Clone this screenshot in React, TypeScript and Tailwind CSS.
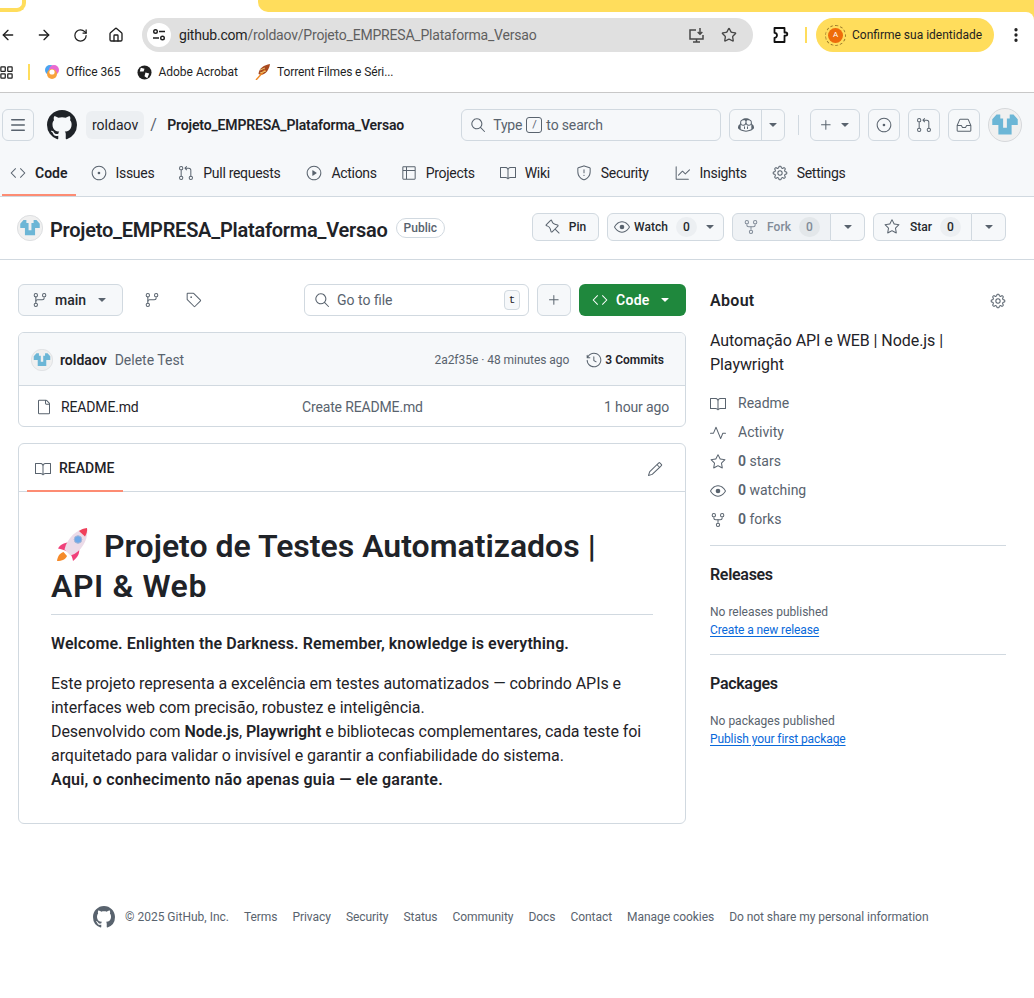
import React from "react";
import {
  GoCode, GoIssueOpened, GoGitPullRequest, GoPlay, GoTable, GoBook, GoShield, GoGraph, GoGear,
  GoRepoForked, GoStar, GoEye, GoPin, GoHistory, GoFile, GoTag, GoGitBranch, GoPencil, GoSearch,
  GoPlus, GoInbox, GoPulse, GoTriangleDown, GoCopilot,
} from "react-icons/go";
import { ArrowLeft, ArrowRight, RotateCw, Home, Star, EllipsisVertical, LayoutGrid } from "lucide-react";

function GoMarkGithub({ size, className = "" }: { size: number; className?: string }) {
  return (
    <svg width={size} height={size} viewBox="0 0 16 16" fill="currentColor" className={`shrink-0 ${className}`}>
      <path d="M8 0c4.42 0 8 3.58 8 8a8.013 8.013 0 0 1-5.45 7.59c-.4.08-.55-.17-.55-.38 0-.27.01-1.13.01-2.2 0-.75-.25-1.23-.54-1.48 1.78-.2 3.65-.88 3.65-3.95 0-.88-.31-1.59-.82-2.15.08-.2.36-1.02-.08-2.12 0 0-.67-.22-2.2.82-.64-.18-1.32-.27-2-.27-.68 0-1.36.09-2 .27-1.53-1.03-2.2-.82-2.2-.82-.44 1.1-.16 1.92-.08 2.12-.51.56-.82 1.28-.82 2.15 0 3.06 1.86 3.75 3.64 3.95-.23.2-.44.55-.51 1.07-.46.21-1.61.55-2.33-.66-.15-.24-.6-.83-1.23-.82-.67.01-.27.38.01.53.34.19.73.9.82 1.13.16.45.68 1.31 2.69.94 0 .67.01 1.3.01 1.49 0 .21-.15.45-.55.38A7.995 7.995 0 0 1 0 8c0-4.42 3.58-8 8-8Z" />
    </svg>
  );
}

function ThreeBars({ size }: { size: number }) {
  return (
    <svg width={size} height={size} viewBox="0 0 16 16" fill="none" stroke="currentColor" strokeWidth="1.5" strokeLinecap="round">
      <path d="M1.75 2.75h12.5M1.75 8h12.5M1.75 13.25h12.5" />
    </svg>
  );
}

function Avatar({ size, className = "" }: { size: number; className?: string }) {
  return (
    <svg width={size} height={size} viewBox="0 0 36 36" className={`shrink-0 ${className}`}>
      <circle cx="18" cy="18" r="17.5" fill="#f0f0f0" stroke="#d4d7da" />
      <path d="M4.5 12 L9 7 H13 V11 H16 V21 H20 V11 H23 V7 H27 L31.5 12 V18 H25 V28 H11 V18 H4.5 Z" fill="#6cb6d6" />
    </svg>
  );
}

function Rocket() {
  return (
    <svg width="36" height="36" viewBox="0 0 36 36" className="shrink-0">
      <path d="M2 34 C2.5 29 5 26 8.5 25 L12 29 C11 32 7 34 2 34 Z" fill="#f58a2a" />
      <path d="M3 21.5 C5 18 9 15.5 14 15.5 L15 26 C12 24 7 22 3 21.5 Z" fill="#f0407a" />
      <path d="M15 26 L24 21 C25 26 23 30 18 34 C17.5 31 16.5 28.5 15 26 Z" fill="#f0407a" />
      <path d="M32 1 C22 2 12 11 9.5 22.5 L15.5 28.5 C26 25.5 34 12 32 1 Z" fill="#ecdbe8" />
      <path d="M32 1 C29 1.3 26 2.5 24 4 L30 9.5 C31.5 7 32.5 4 32 1 Z" fill="#f0405a" />
      <circle cx="23" cy="12.5" r="3.8" fill="#6fa8e8" stroke="#a9b7d6" />
    </svg>
  );
}

function Chrome() {
  const bm = "flex items-center gap-[6px] text-[12px] text-[#1f1f1f]";
  return (
    <div className="bg-white">
      <div className="flex h-[12px]">
        <div className="w-[26px] h-[12px] border-r-[4px] border-b-[4px] border-[#ffdd5c] rounded-br-[9px]" />
        <div className="w-[232px]" />
        <div className="flex-1 bg-[#ffdd5c] rounded-bl-[10px]" />
      </div>
      <div className="relative flex items-center h-[46px]">
        <span className="absolute top-0 right-0 w-[8px] h-[8px] bg-[#ffdd5c]"><span className="block w-full h-full bg-white rounded-tr-[8px]" /></span>
        <div className="flex items-center w-[142px] text-[#1f1f1f]">
          <ArrowLeft size={16} strokeWidth={2} />
          <ArrowRight size={16} strokeWidth={2} className="ml-[20px]" />
          <RotateCw size={15} strokeWidth={2} className="ml-[21px]" />
          <Home size={16} strokeWidth={2} className="ml-[20px]" />
        </div>
        <div className="w-[611px] h-[34px] rounded-full bg-[#e0e0e0] flex items-center pl-[5px]">
          <span className="w-[24px] h-[24px] bg-white rounded-full flex items-center justify-center text-[#1f1f1f]">
            <svg width="14" height="14" viewBox="0 0 14 14" fill="none" stroke="currentColor" strokeWidth="1.4">
              <circle cx="3.5" cy="3.5" r="1.8" /><path d="M7 3.5h6M1 10h6" /><circle cx="10.5" cy="10" r="1.8" />
            </svg>
          </span>
          <span className="ml-[8px] text-[14px] tracking-[-0.2px]"><span className="text-[#1f1f1f]">github.com</span><span className="text-[#5f5f5f]">/roldaov/Projeto_EMPRESA_Plataforma_Versao</span></span>
          <svg width="17" height="17" viewBox="0 0 17 17" fill="none" stroke="#474747" strokeWidth="1.5" className="ml-auto">
            <path d="M8 3H2v9h13V8M5 15h7M8.5 12v3M12 1v6M9.7 5 12 7.3 14.3 5" />
          </svg>
          <Star size={16} strokeWidth={2} className="ml-[16px] mr-[16px] text-[#474747]" />
        </div>
        <svg width="18" height="18" viewBox="0 0 18 18" fill="none" stroke="#111" strokeWidth="1.8" strokeLinejoin="round" className="ml-[18px]">
          <path d="M3.5 2h10v4.5h1.2a1.6 1.6 0 0 1 0 3.2h-1.2V16h-10v-4.2a2.4 2.4 0 0 0 0-5V2Z" />
        </svg>
        <span className="ml-[16px] w-[2px] h-[16px] bg-[#ffdd5c]" />
        <div className="ml-[9px] w-[178px] h-[34px] rounded-full bg-[#ffdd5c] flex items-center pl-[12px] gap-[9px]">
          <span className="w-[15px] h-[15px] rounded-full bg-[#ee6c0a] text-white text-[8px] flex items-center justify-center outline-1 outline-dashed outline-[#9a7a2a] outline-offset-[2px] shrink-0">A</span>
          <span className="text-[12px] text-[#1f1f1f] whitespace-nowrap">Confirme sua identidade</span>
        </div>
        <EllipsisVertical size={18} strokeWidth={2.4} className="ml-[13px] text-[#1f1f1f]" />
      </div>
      <div className="flex items-center h-[35px] pb-[6px] border-b border-[#c8c8c8]">
        <LayoutGrid size={15} strokeWidth={2} className="text-[#1f1f1f] -ml-[1px]" />
        <span className="ml-[14px] w-[2px] h-[16px] bg-[#ffdd5c]" />
        <span className={`${bm} ml-[14px] tracking-[-0.1px]`}>
          <svg width="16" height="16" viewBox="0 0 16 16"><circle cx="6" cy="6" r="5" fill="#4aa4f0" /><circle cx="10" cy="6" r="5" fill="#e86ad0" /><circle cx="8" cy="10" r="5" fill="#f8a23c" /><circle cx="8" cy="8" r="2.6" fill="#fff" /></svg>
          Office 365
        </span>
        <span className={`${bm} ml-[17px]`}>
          <svg width="15" height="15" viewBox="0 0 16 16"><circle cx="8" cy="8" r="7.5" fill="#1f1f1f" /><path d="M4 3 L8 4 L7 7 L3 7 Z M9 8 L13 9 L11 14 L8 12 Z" fill="#fff" /></svg>
          Adobe Acrobat
        </span>
        <span className={`${bm} ml-[17px] tracking-[-0.12px]`}>
          <svg width="16" height="16" viewBox="0 0 16 16"><path d="M15 0 C9 1 4 4 3.5 10 L6 11 C11 10 14 6 15 0 Z" fill="#a8481e" /><path d="M1 16 L10 6" stroke="#f08a24" strokeWidth="1.4" /><path d="M5 6 L10 4 M5 9 L11 7" stroke="#e8c070" /></svg>
          Torrent Filmes e Séri...
        </span>
      </div>
    </div>
  );
}

function TopBtn({ children, w = 32 }: { children: React.ReactNode; w?: number }) {
  return <span style={{ width: w }} className="h-[32px] flex items-center justify-center border border-[#d1d9e0] rounded-[6px] text-[#59636e] shrink-0">{children}</span>;
}

function Tab({ icon, label, active, gap }: { icon: React.ReactNode; label: string; active?: boolean; gap: string }) {
  return (
    <span className={`relative flex items-center h-[46px] gap-[9px] text-[14px] ${gap} ${active ? "font-semibold text-[#1f2328]" : "tracking-[-0.3px] text-[#1f2328]"}`}>
      <span className="text-[#59636e] flex">{icon}</span>
      {label}
      {active && <span className="absolute left-[-8px] right-[-8px] bottom-0 h-[2px] bg-[#fd8c73]" />}
    </span>
  );
}

function GhHeader() {
  return (
    <div className="bg-[#f6f8fa] border-b border-[#d1d9e0] h-[104px] pt-[16px]">
      <div className="flex items-center h-[32px] pl-[2px]">
        <TopBtn><ThreeBars size={16} /></TopBtn>
        <GoMarkGithub size={30} className="ml-[13px] text-[#1f2328]" />
        <span className="ml-[9px] h-[28px] px-[6px] rounded-[6px] bg-[#eceff2] flex items-center text-[14px] text-[#1f2328]">roldaov</span>
        <span className="ml-[6px] text-[#59636e] text-[16px] w-[10px]">/</span>
        <span className="ml-[7px] w-[294px] text-[14px] font-semibold tracking-[-0.15px] text-[#1f2328] whitespace-nowrap">Projeto_EMPRESA_Plataforma_Versao</span>
        <div className="w-[260px] h-[32px] border border-[#d1d9e0] rounded-[6px] flex items-center pl-[8px] text-[#59636e] text-[14px] tracking-[-0.15px] shrink-0">
          <GoSearch size={16} />
          <span className="ml-[7px]">Type</span>
          <span className="mx-[4px] w-[16px] h-[16px] border border-[#59636e] rounded-[3px] flex items-center justify-center text-[11px]">/</span>
          <span>to search</span>
        </div>
        <div className="ml-[8px] h-[32px] w-[56px] border border-[#d1d9e0] rounded-[6px] flex text-[#59636e] shrink-0">
          <span className="w-[32px] flex items-center justify-center border-r border-[#d1d9e0]"><GoCopilot size={16} /></span>
          <span className="flex-1 flex items-center justify-center"><GoTriangleDown size={14} /></span>
        </div>
        <span className="ml-[13px] w-px h-[20px] bg-[#d1d9e0]" />
        <span className="ml-[11px]"><TopBtn w={50}><GoPlus size={16} /><GoTriangleDown size={14} className="ml-[4px]" /></TopBtn></span>
        <span className="ml-[8px]"><TopBtn><GoIssueOpened size={16} /></TopBtn></span>
        <span className="ml-[8px]"><TopBtn><GoGitPullRequest size={16} /></TopBtn></span>
        <span className="ml-[8px]"><TopBtn><GoInbox size={16} /></TopBtn></span>
        <Avatar size={34} className="ml-[8px]" />
      </div>
      <div className="flex items-center mt-[9px] pl-[10px]">
        <Tab active gap="mr-[23px]" icon={<GoCode size={16} />} label="Code" />
        <Tab gap="mr-[24px]" icon={<GoIssueOpened size={16} />} label="Issues" />
        <Tab gap="mr-[26px]" icon={<GoGitPullRequest size={16} />} label="Pull requests" />
        <Tab gap="mr-[24px]" icon={<GoPlay size={16} />} label="Actions" />
        <Tab gap="mr-[25px]" icon={<GoTable size={16} />} label="Projects" />
        <Tab gap="mr-[26px]" icon={<GoBook size={16} />} label="Wiki" />
        <Tab gap="mr-[26px]" icon={<GoShield size={16} />} label="Security" />
        <Tab gap="mr-[25px]" icon={<GoGraph size={16} />} label="Insights" />
        <Tab gap="" icon={<GoGear size={16} />} label="Settings" />
      </div>
    </div>
  );
}

function Counter({ n, muted }: { n: string; muted?: boolean }) {
  return <span className={`w-[21px] h-[20px] rounded-full flex items-center justify-center text-[12px] font-medium ${muted ? "bg-[#e3e7ea] text-[#818b98]" : "bg-[#eceff2] text-[#25292e]"}`}>{n}</span>;
}

const btn = "h-[28px] border border-[#d1d9e0] rounded-[6px] flex items-center text-[12px] font-medium shrink-0";
const std = `${btn} bg-[#f6f8fa] text-[#25292e]`;

function RepoHead() {
  return (
    <div className="flex items-center h-[63px] border-b border-[#d1d9e0] pl-[17px] pr-[28px]">
      <Avatar size={26} />
      <span className="ml-[7px] mt-[3px] text-[20px] font-semibold tracking-[-0.24px] text-[#1f2328] whitespace-nowrap">Projeto_EMPRESA_Plataforma_Versao</span>
      <span className="ml-[8px] h-[20px] px-[7px] border border-[#d1d9e0] rounded-full text-[12px] font-medium text-[#59636e] flex items-center">Public</span>
      <div className="ml-auto mt-[-2px] flex gap-[8px]">
        <span className={`${std} w-[67px] justify-center gap-[8px]`}><GoPin size={16} className="text-[#59636e]" />Pin</span>
        <span className={`${std} w-[117px] justify-center gap-[4px]`}><GoEye size={16} className="text-[#59636e]" />Watch<span className="ml-[4px]"><Counter n="0" /></span><GoTriangleDown size={14} className="text-[#59636e] ml-[2px]" /></span>
        <span className="flex">
          <span className={`${btn} bg-[#eff2f5] text-[#818b98] w-[99px] justify-center gap-[8px] rounded-r-none`}><GoRepoForked size={16} />Fork<Counter n="0" muted /></span>
          <span className={`${std} w-[34px] justify-center rounded-l-none border-l-0 text-[#59636e]`}><GoTriangleDown size={14} /></span>
        </span>
        <span className="flex">
          <span className={`${std} w-[99px] justify-center gap-[8px] rounded-r-none`}><GoStar size={16} className="text-[#59636e]" /><span className="ml-[2px]">Star</span><Counter n="0" /></span>
          <span className={`${std} w-[34px] justify-center rounded-l-none border-l-0 text-[#59636e]`}><GoTriangleDown size={14} /></span>
        </span>
      </div>
    </div>
  );
}

function Toolbar() {
  return (
    <div className="flex items-center h-[32px]">
      <span className="h-[32px] w-[105px] bg-[#f6f8fa] border border-[#d1d9e0] rounded-[6px] flex items-center pl-[13px] text-[14px] font-medium text-[#25292e]">
        <GoGitBranch size={16} className="text-[#59636e]" />
        <span className="ml-[7px]">main</span>
        <GoTriangleDown size={14} className="ml-[9px] text-[#59636e]" />
      </span>
      <GoGitBranch size={16} className="ml-[21px] text-[#59636e]" />
      <GoTag size={16} className="ml-[26px] text-[#59636e]" />
      <div className="ml-auto w-[225px] h-[32px] border border-[#d1d9e0] rounded-[6px] flex items-center pl-[9px] pr-[8px] text-[14px] text-[#59636e]">
        <GoSearch size={16} />
        <span className="ml-[7px]">Go to file</span>
        <span className="ml-auto w-[16px] h-[20px] bg-[#f6f8fa] border border-[#d1d9e0] rounded-[4px] flex items-center justify-center text-[11px] font-['Liberation_Mono',monospace] text-[#1f2328]">t</span>
      </div>
      <span className="ml-[8px] w-[34px] h-[32px] bg-[#f6f8fa] border border-[#d1d9e0] rounded-[6px] flex items-center justify-center text-[#59636e]"><GoPlus size={16} /></span>
      <span className="ml-[8px] w-[107px] h-[32px] bg-[#1f883d] rounded-[6px] flex items-center pl-[13px] text-[14px] font-semibold text-white">
        <GoCode size={16} />
        <span className="ml-[8px] tracking-[0.3px]">Code</span>
        <GoTriangleDown size={14} className="ml-[8px]" />
      </span>
    </div>
  );
}

function Commits() {
  return (
    <div className="mt-[16px] border border-[#d1d9e0] rounded-[6px] overflow-hidden">
      <div className="h-[53px] pt-[2px] bg-[#f6f8fa] border-b border-[#d1d9e0] flex items-center pl-[12px] pr-[21px]">
        <Avatar size={22} />
        <span className="ml-[7px] text-[14px] font-semibold text-[#1f2328]">roldaov</span>
        <span className="ml-[8px] text-[14px] text-[#59636e]">Delete Test</span>
        <span className="ml-auto text-[12px] tracking-[-0.04px] text-[#59636e]">2a2f35e · 48 minutes ago</span>
        <GoHistory size={16} className="ml-[17px] text-[#59636e]" />
        <span className="ml-[3px] text-[12px] font-semibold text-[#1f2328]">3 Commits</span>
      </div>
      <div className="h-[40px] pt-[2px] flex items-center pl-[17px] pr-[16px] text-[14px] tracking-[-0.15px]">
        <GoFile size={16} className="text-[#59636e]" />
        <span className="ml-[9px] w-[241px] text-[#1f2328]">README.md</span>
        <span className="text-[#59636e]">Create README.md</span>
        <span className="ml-auto text-[#59636e]">1 hour ago</span>
      </div>
    </div>
  );
}

function Readme() {
  return (
    <div className="mt-[16px] border border-[#d1d9e0] rounded-[6px] h-[381px]">
      <div className="relative h-[48px] pt-[2px] border-b border-[#d1d9e0] flex items-center pl-[16px] pr-[22px]">
        <GoBook size={16} className="text-[#59636e]" />
        <span className="ml-[8px] text-[14px] font-medium text-[#1f2328]">README</span>
        <GoPencil size={16} className="ml-auto text-[#59636e]" />
        <span className="absolute left-[8px] bottom-[-1px] w-[96px] h-[2px] bg-[#fd8c73]" />
      </div>
      <div className="px-[32px] pt-[34px]">
        <h1 className="text-[32px] leading-[40px] font-semibold text-[#1f2328] border-b border-[#d1d9e0] pb-[8px]">
          <span className="inline-flex align-[-6px] mr-[13px] ml-[4px]"><Rocket /></span>Projeto de Testes Automatizados |<br /><span className="tracking-[0.6px]">API &amp; Web</span>
        </h1>
        <p className="mt-[17px] text-[16px] leading-[24px] font-semibold tracking-[0.09px] text-[#1f2328]">Welcome. Enlighten the Darkness. Remember, knowledge is everything.</p>
        <p className="mt-[16px] text-[16px] leading-[24px] tracking-[-0.06px] text-[#1f2328]">
          Este projeto representa a excelência em testes automatizados — cobrindo APIs e<br />
          interfaces web com precisão, robustez e inteligência.<br />
          Desenvolvido com <b className="font-semibold">Node.js</b>, <b className="font-semibold">Playwright</b> e bibliotecas complementares, cada teste foi<br />
          arquitetado para validar o invisível e garantir a confiabilidade do sistema.<br />
          <b className="font-semibold tracking-[0.2px]">Aqui, o conhecimento não apenas guia — ele garante.</b>
        </p>
      </div>
    </div>
  );
}

function SideRow({ icon, children }: { icon: React.ReactNode; children: React.ReactNode }) {
  return (
    <div className="h-[29px] flex items-center text-[14px] text-[#59636e]">
      <span className="w-[28px] flex">{icon}</span>
      <span>{children}</span>
    </div>
  );
}

function Sidebar() {
  return (
    <aside className="w-[296px] shrink-0">
      <div className="h-[32px] pt-[2px] flex items-center justify-between">
        <h2 className="text-[16px] font-semibold tracking-[0.3px] text-[#1f2328]">About</h2>
        <GoGear size={16} className="text-[#59636e]" />
      </div>
      <p className="mt-[13px] text-[16px] leading-[24px] tracking-[-0.06px] text-[#1f2328]">Automação API e WEB | Node.js |<br />Playwright</p>
      <div className="mt-[12px] pb-[11px] border-b border-[#d1d9e0]">
        <SideRow icon={<GoBook size={16} />}>Readme</SideRow>
        <SideRow icon={<GoPulse size={16} />}>Activity</SideRow>
        <SideRow icon={<GoStar size={16} />}><b className="font-semibold">0</b> stars</SideRow>
        <SideRow icon={<GoEye size={16} />}><b className="font-semibold">0</b> watching</SideRow>
        <SideRow icon={<GoRepoForked size={16} />}><b className="font-semibold">0</b> forks</SideRow>
      </div>
      <div className="pt-[17px] pb-[15px] border-b border-[#d1d9e0]">
        <h2 className="text-[16px] leading-[24px] font-semibold tracking-[-0.3px] text-[#1f2328]">Releases</h2>
        <p className="mt-[16px] text-[12px] leading-[18px] text-[#59636e]">No releases published</p>
        <a className="text-[12px] leading-[18px] tracking-[-0.1px] text-[#0969da] underline underline-offset-2 block">Create a new release</a>
      </div>
      <div className="pt-[17px]">
        <h2 className="text-[16px] leading-[24px] font-semibold tracking-[-0.3px] text-[#1f2328]">Packages</h2>
        <p className="mt-[16px] text-[12px] leading-[18px] text-[#59636e]">No packages published</p>
        <a className="text-[12px] leading-[18px] tracking-[-0.1px] text-[#0969da] underline underline-offset-2 block">Publish your first package</a>
      </div>
    </aside>
  );
}

function Footer() {
  const items = ["Terms", "Privacy", "Security", "Status", "Community", "Docs", "Contact", "Manage cookies", "Do not share my personal information"];
  return (
    <div className="mt-[81px] pl-[93px] flex items-center text-[12px] text-[#59636e] h-[24px]">
      <GoMarkGithub size={22} className="text-[#59636e]" />
      <span className="ml-[10px]">© 2025 GitHub, Inc.</span>
      {items.map((t) => <span key={t} className="ml-[15px] whitespace-nowrap tracking-[-0.05px]">{t}</span>)}
    </div>
  );
}

export default function App() {
  return (
    <div className="w-[1034px] h-[998px] bg-white overflow-hidden font-['Roboto','Noto_Sans',sans-serif]">
      <Chrome />
      <GhHeader />
      <RepoHead />
      <div className="flex gap-[24px] pl-[18px] pr-[28px] pt-[24px]">
        <main className="w-[668px] shrink-0">
          <Toolbar />
          <Commits />
          <Readme />
        </main>
        <Sidebar />
      </div>
      <Footer />
    </div>
  );
}
